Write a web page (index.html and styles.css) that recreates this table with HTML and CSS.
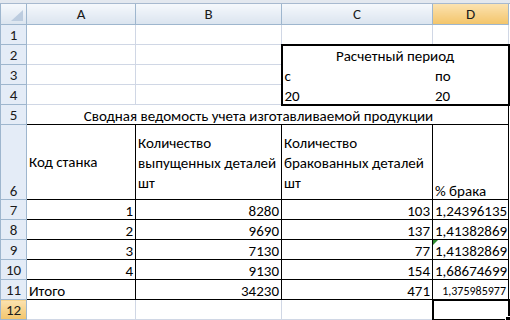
FILE: index.html
```html
<!DOCTYPE html>
<html>
<head>
<meta charset="utf-8">
<link rel="stylesheet" href="styles.css">
</head>
<body>
<div class="topbar"></div>
<table class="sheet">
  <colgroup>
    <col class="c-h"><col class="c-a"><col class="c-b"><col class="c-c"><col class="c-d">
  </colgroup>
  <tr class="hdr">
    <th class="corner"><svg width="26" height="20" viewBox="0 0 26 20"><polygon points="10,17 22,17 22,6" fill="#bcccdf"/></svg></th>
    <th>A</th><th>B</th><th>C</th><th class="sel">D</th>
  </tr>
  <tr><th class="rh">1</th><td></td><td></td><td></td><td></td></tr>
  <tr><th class="rh">2</th><td></td><td></td><td colspan="2" class="box-top center">Расчетный период</td></tr>
  <tr><th class="rh">3</th><td></td><td></td><td class="box-l">с</td><td class="box-r">по</td></tr>
  <tr><th class="rh">4</th><td></td><td></td><td class="box-l box-b">20</td><td class="box-r box-b">20</td></tr>
  <tr><th class="rh">5</th><td colspan="4" class="bk center title">Сводная ведомость учета изготавливаемой продукции</td></tr>
  <tr class="tall">
    <th class="rh bottom">6</th>
    <td class="bk mid">Код станка</td>
    <td class="bk wrap">Количество выпущенных деталей шт</td>
    <td class="bk wrap">Количество бракованных деталей шт</td>
    <td class="bk bottom">% брака</td>
  </tr>
  <tr><th class="rh">7</th><td class="bk num">1</td><td class="bk num">8280</td><td class="bk num">103</td><td class="bk num">1,24396135</td></tr>
  <tr><th class="rh">8</th><td class="bk num">2</td><td class="bk num">9690</td><td class="bk num">137</td><td class="bk num">1,41382869</td></tr>
  <tr><th class="rh">9</th><td class="bk num">3</td><td class="bk num">7130</td><td class="bk num">77</td><td class="bk num flag">1,41382869</td></tr>
  <tr><th class="rh">10</th><td class="bk num">4</td><td class="bk num">9130</td><td class="bk num">154</td><td class="bk num">1,68674699</td></tr>
  <tr><th class="rh">11</th><td class="bk">Итого</td><td class="bk num">34230</td><td class="bk num">471</td><td class="bk num small">1,375985977</td></tr>
  <tr><th class="rh sel">12</th><td></td><td></td><td></td><td class="active"></td></tr>
</table>
</body>
</html>
```

FILE: styles.css
```css
body {
  margin: 0;
  background: #fff;
  font-family: "Carlito", "Liberation Sans", sans-serif;
  font-size: 15px;
  color: #000;
}
.topbar {
  height: 3px;
  background: #e3e8ef;
  border-bottom: 1px solid #a7b9cf;
}
.sheet {
  border-collapse: collapse;
  table-layout: fixed;
  width: 508px;
}
.c-h { width: 26px; }
.c-a { width: 109px; }
.c-b { width: 146px; }
.c-c { width: 151px; }
.c-d { width: 76px; }

.sheet tr { height: 20px; }
.sheet tr.tall { height: 75px; }

.sheet td, .sheet th {
  padding: 0 2px;
  border: 1px solid #d0d7e5;
  white-space: nowrap;
  overflow: visible;
  vertical-align: bottom;
  text-align: left;
  font-weight: normal;
  line-height: 16px;
}
.sheet th {
  background: linear-gradient(#f5f8fc, #dbe4ef);
  border-color: #9eb6ce;
  color: #1b1b1b;
  text-align: center;
}
.hdr th {
  vertical-align: middle;
  border-top: none;
}
.sheet th.rh {
  background: #e4ecf7;
  text-align: center;
  vertical-align: middle;
  padding: 0;
}
.sheet th.rh.bottom { vertical-align: bottom; }
.sheet th.sel, .sheet th.rh.sel {
  background: linear-gradient(#fbe2b0, #f3c56b);
  border-color: #c4a36a #9eb6ce #9eb6ce #9eb6ce;
}
.corner {
  padding: 0 !important;
}
.corner svg { display: block; }

.sheet td.center { text-align: center; }
.sheet td.box-top { border: 2px solid #000; border-bottom: 1px solid #fff; }
.sheet td.box-l { border-left: 2px solid #000; border-top-color: #fff; border-bottom-color: #fff; border-right-color: #fff; }
.sheet td.box-r { border-right: 2px solid #000; border-top-color: #fff; border-bottom-color: #fff; border-left-color: #fff; }
.sheet td.box-b { border-bottom: 2px solid #000; }

.sheet td.bk { border: 1px solid #000; }
.sheet td.title { padding-right: 20px; }

.sheet td.mid { vertical-align: top; padding-top: 29px; line-height: 17px; }
.sheet td.wrap { white-space: normal; vertical-align: top; line-height: 20px; padding-top: 8px; }
.sheet td.bottom { vertical-align: bottom; }
.sheet td.num { text-align: right; }
.sheet td.small { font-size: 12px; }
.sheet td.flag { position: relative; }
.sheet td.flag::before {
  content: "";
  position: absolute;
  left: 0;
  top: 0;
  border-top: 5px solid #2e8b2e;
  border-right: 5px solid transparent;
}
.sheet td.active {
  border: 2px solid #000;
  position: relative;
}
.sheet td.active::after {
  content: "";
  position: absolute;
  right: -4px;
  bottom: -4px;
  width: 5px;
  height: 5px;
  background: #000;
  border: 1px solid #fff;
}
```
